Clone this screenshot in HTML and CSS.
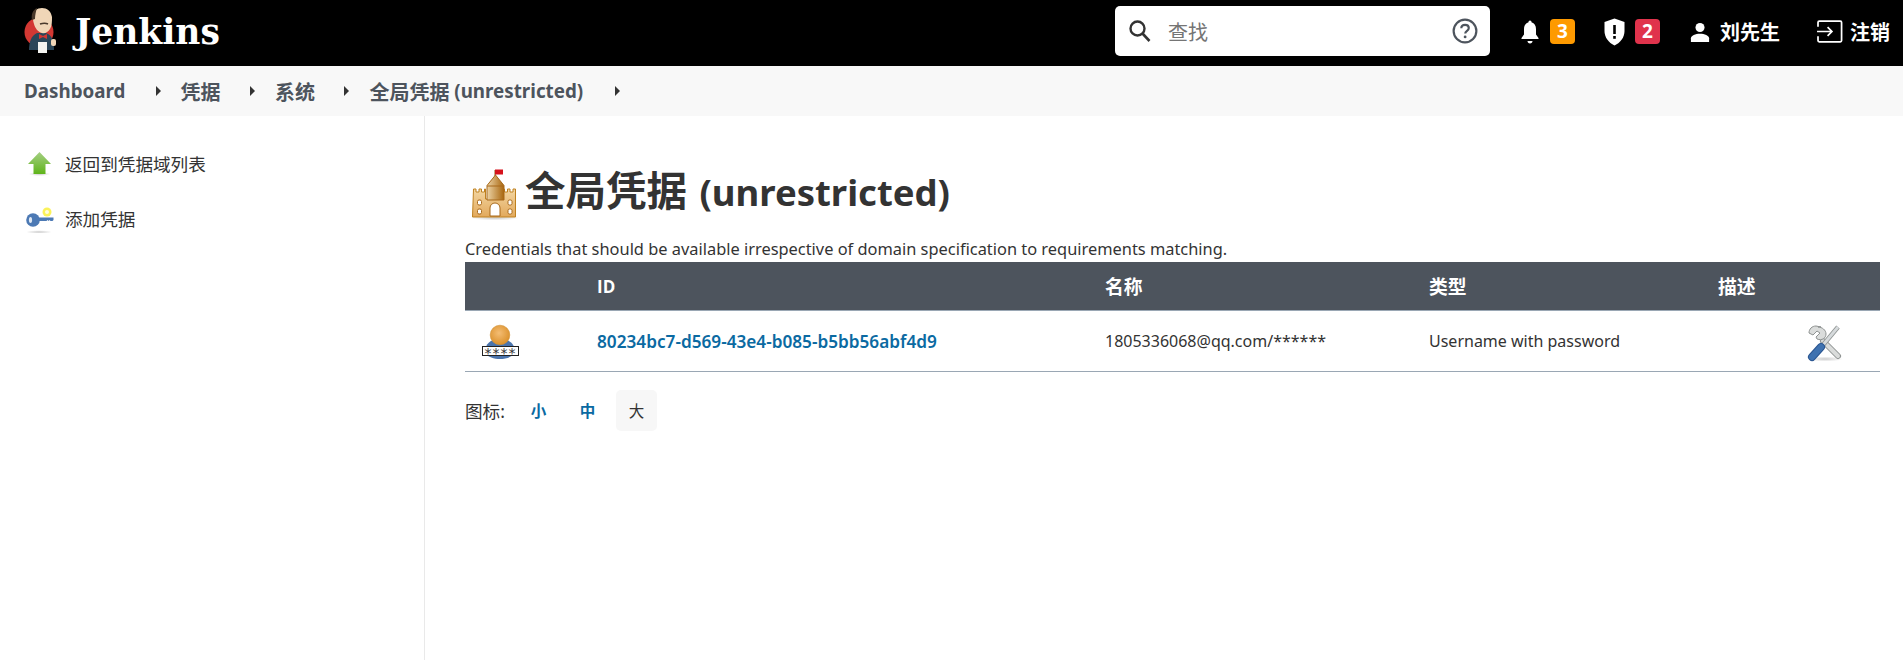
FILE: index.html
```html
<!DOCTYPE html>
<html lang="zh-CN">

<head>
    <meta charset="UTF-8">
    <title>全局凭据 (unrestricted) [Jenkins]</title>
    <link rel="stylesheet" href="styles.css">
</head>

<body>
    <svg class="defs" width="0" height="0">
        <defs>
            <linearGradient id="grad-green" x1="0" y1="0" x2="0" y2="1">
                <stop offset="0" stop-color="#a5cf83" />
                <stop offset="1" stop-color="#5fb41a" />
            </linearGradient>
            <linearGradient id="grad-sand" x1="0" y1="0" x2="0" y2="1">
                <stop offset="0" stop-color="#f3d6a2" />
                <stop offset="1" stop-color="#e2a95c" />
            </linearGradient>
            <linearGradient id="grad-tower" x1="0" y1="0" x2="1" y2="0">
                <stop offset="0" stop-color="#ecd3a6" />
                <stop offset="1" stop-color="#a9670f" />
            </linearGradient>
            <radialGradient id="grad-head" cx="0.45" cy="0.4" r="0.65">
                <stop offset="0" stop-color="#f4bd74" />
                <stop offset="1" stop-color="#d98d25" />
            </radialGradient>
            <radialGradient id="grad-shadow">
                <stop offset="0" stop-color="#999" stop-opacity="0.5" />
                <stop offset="1" stop-color="#999" stop-opacity="0" />
            </radialGradient>
        </defs>
    </svg>

    <header class="page-header">
        <a class="logo">
            <svg class="logo-head" width="60" height="60" viewBox="0 0 60 60">
                <circle cx="29" cy="32" r="14.500" fill="#d33833" />
                <path d="M19 50c0-8 2-14 8-17h9c6 2 8 8 8 17z" fill="#2b4658" />
                <path d="M23 17c0-6 4-9 9-9s9 3 10 9c0 4 0 9-2 12-2 3-5 5-8 4-4-1-7-5-8-9-1-3-1-5-1-7z" fill="#f0d6b7" />
                <path d="M22 20c-1-6 1-10 5-12-1 3-2 7-2 11z" fill="#49392b" />
                <path d="M30 24c3-1 6-1 8 0" fill="none" stroke="#49392b" stroke-width="1.600" />
                <path d="M29 34l4 2 4-2v5l-4-2-4 2z" fill="#d33833" />
                <rect x="28" y="42" width="9" height="11" fill="#f4f4f0" />
                <rect x="41" y="39" width="5" height="7" rx="2" fill="#f0d6b7" />
            </svg>
            <span class="logo-text">Jenkins</span>
        </a>
        <div class="search-box">
            <svg class="search-icon" width="24" height="24" viewBox="0 0 24 24">
                <circle cx="9.500" cy="9.500" r="7" fill="none" stroke="#333" stroke-width="2.400" />
                <path d="M14.500 14.500l7 7.500" stroke="#333" stroke-width="2.600" />
            </svg>
            <span class="search-placeholder">查找</span>
            <svg class="help-icon" width="26" height="26" viewBox="0 0 24 24">
                <circle cx="12" cy="12" r="10.500" fill="none" stroke="#4d545d" stroke-width="2" />
                <path d="M8.600 9.500c0-2 1.500-3.200 3.500-3.200s3.400 1.200 3.400 3c0 2.600-3.300 2.500-3.300 5.100" fill="none" stroke="#4d545d" stroke-width="2" />
                <circle cx="12.100" cy="17.500" r="1.300" fill="#4d545d" />
            </svg>
        </div>
        <div class="header-item bell-item">
            <svg width="20" height="26" viewBox="0 0 20 26">
                <path d="M10 1.500c1 0 1.500 .8 1.500 1.700 3 1 4.500 3.500 4.500 7v5.300l2.500 3.500v1H1.500v-1L4 15.500v-5.300c0-3.500 1.500-6 4.500-7C8.500 2.300 9 1.500 10 1.500z" fill="#fff" />
                <path d="M7.500 22h5c0 1.500-1 2.500-2.500 2.500S7.500 23.500 7.500 22z" fill="#fff" />
            </svg>
            <span class="badge badge-warn">3</span>
        </div>
        <div class="header-item shield-item">
            <svg width="23" height="28" viewBox="0 0 22 28">
                <path d="M11 .5l10 3.500v9c0 6.500-4 11.500-10 14.500C5 24.500 1 19.500 1 13V4z" fill="#fff" />
                <rect x="9.700" y="7" width="2.600" height="9" fill="#000" />
                <rect x="9.700" y="18" width="2.600" height="2.800" fill="#000" />
            </svg>
            <span class="badge badge-danger">2</span>
        </div>
        <div class="header-item user-item">
            <svg width="20" height="20" viewBox="0 0 22 22">
                <circle cx="11" cy="6" r="5" fill="#fff" />
                <path d="M1 22v-4c0-3 5-5 10-5s10 2 10 5v4z" fill="#fff" />
            </svg>
            <span>刘先生</span>
        </div>
        <div class="header-item logout-item">
            <svg width="27" height="23" viewBox="0 0 28 24">
                <path d="M2 7V2.500c0-.8.500-1.300 1.300-1.300h22c.8 0 1.300.5 1.300 1.300v19c0 .8-.5 1.300-1.300 1.300h-22c-.8 0-1.300-.5-1.300-1.300V17" fill="none" stroke="#fff" stroke-width="1.800" />
                <path d="M1 12h15M12 7.500l4.500 4.500-4.500 4.500" fill="none" stroke="#fff" stroke-width="1.800" />
            </svg>
            <span>注销</span>
        </div>
    </header>

    <nav class="breadcrumbs">
        <a class="crumb crumb-dash"><span class="lat">Dashboard</span></a>
        <a class="crumb crumb-a">凭据</a>
        <a class="crumb crumb-b">系统</a>
        <a class="crumb crumb-c">全局凭据<span class="lat">&nbsp;(unrestricted)</span></a>
    </nav>

    <div class="page-body">
        <aside class="side-panel">
            <div class="task">
                <svg width="30" height="30" viewBox="0 -1 30 30">
                    <ellipse cx="13.500" cy="25" rx="11" ry="2" fill="url(#grad-shadow)" />
                    <path d="M13.500 3L25 15H19.500V25H7.500V15H2z" fill="url(#grad-green)" />
                </svg>
                <span>返回到凭据域列表</span>
            </div>
            <div class="task">
                <svg class="key-icon" width="30" height="30" viewBox="0 -2 30 30">
                    <ellipse cx="13" cy="27" rx="13" ry="1.800" fill="url(#grad-shadow)" />
                    <circle cx="21" cy="7" r="4.500" fill="#fbf25a" />
                    <circle cx="21" cy="7" r="2" fill="#fffde0" />
                    <path d="M10 12.500h17.500v2.500l-1 1h-2l-1-1-1 1-1-1-1 1h-10.500z" fill="#4c79b4" />
                    <circle cx="7" cy="15" r="6.800" fill="#4c79b4" />
                    <ellipse cx="4.500" cy="15" rx="1.600" ry="3" fill="#dfe8f3" />
                </svg>
                <span>添加凭据</span>
            </div>
        </aside>

        <main class="main-panel">
            <h1 class="page-title">
                <svg width="70" height="70" viewBox="0 0 70 70">
                    <ellipse cx="35" cy="58" rx="24" ry="2.500" fill="url(#grad-shadow)" />
                    <rect x="34.500" y="10" width="1.200" height="6" fill="#8a5a14" />
                    <rect x="35" y="9.500" width="8" height="5" fill="#d6121c" />
                    <path d="M13.500 29h2.500v3h3v-3h2.500v3h3v-3h1v10h18V29h1v3h3v-3h2.500v3h3v-3h2.500v28h-43z" fill="url(#grad-sand)" stroke="#bf8120" />
                    <path d="M35.500 15L44 25.500V40H27V25.500z" fill="url(#grad-tower)" stroke="#a8691a" />
                    <path d="M27 26h17" stroke="#a8691a" />
                    <path d="M30 56V48c0-3 2.300-5 5-5s5 2 5 5v8z" fill="#fff" stroke="#a8691a" />
                    <rect x="17.500" y="40" width="4" height="5" rx="1.500" fill="#fff" stroke="#a8691a" />
                    <rect x="48" y="40" width="4" height="5" rx="1.500" fill="#fff" stroke="#a8691a" />
                    <rect x="17.500" y="49" width="4" height="5" rx="1.500" fill="#fff" stroke="#a8691a" />
                    <rect x="48" y="49" width="4" height="5" rx="1.500" fill="#fff" stroke="#a8691a" />
                </svg>
                <span>全局凭据<span class="title-lat"> (unrestricted)</span></span>
            </h1>
            <div class="description">Credentials that should be available irrespective of domain specification to requirements matching.</div>
            <table class="cred-table">
                <colgroup>
                    <col class="col-icon">
                    <col class="col-id">
                    <col class="col-name">
                    <col class="col-type">
                    <col class="col-desc">
                    <col>
                </colgroup>
                <thead>
                    <tr>
                        <th></th>
                        <th class="th-lat">ID</th>
                        <th>名称</th>
                        <th>类型</th>
                        <th>描述</th>
                        <th></th>
                    </tr>
                </thead>
                <tbody>
                    <tr>
                        <td class="icon-cell">
                            <svg width="60" height="50" viewBox="0 0 60 50">
                                <path d="M15 37c0-9 5-14 15-14s15 5 15 14c-3 4-9 6-15 6s-12-2-15-6z" fill="#4a74ad" />
                                <circle cx="30" cy="19" r="9.800" fill="url(#grad-head)" stroke="#d29236" stroke-width=".6" />
                                <rect x="12.500" y="30.500" width="36" height="9" fill="#fff" stroke="#222" stroke-width="1" />
                                <text class="stars" x="30.500" y="42">****</text>
                            </svg>
                        </td>
                        <td><a class="cred-link">80234bc7-d569-43e4-b085-b5bb56abf4d9</a></td>
                        <td>1805336068@qq.com/******</td>
                        <td>Username with password</td>
                        <td></td>
                        <td class="tool-cell">
                            <svg width="60" height="50" viewBox="0 0 60 50">
                                <ellipse cx="30" cy="43" rx="18" ry="2.500" fill="url(#grad-shadow)" />
                                <path d="M28 25l15 15" stroke="#8f9392" stroke-width="6" stroke-linecap="round" />
                                <path d="M28 25l15 15" stroke="#dadcdb" stroke-width="4" stroke-linecap="round" />
                                <path d="M21 10c-4 0-7 3-7 7l4 2 4-4 3 2-4 4 1 2c5 2 9-1 9-5 0-4-4-7-8-7l3 0z" fill="#dadcdb" stroke="#8f9392" />
                                <path d="M28 29l15-18" stroke="#8f9392" stroke-width="4.500" />
                                <path d="M28 29l15-18" stroke="#d6dadc" stroke-width="2.800" />
                                <path d="M17 41l9-10" stroke="#2a5590" stroke-width="8" stroke-linecap="round" />
                                <path d="M17 41l9-10" stroke="#3f72b0" stroke-width="6" stroke-linecap="round" />
                            </svg>
                        </td>
                    </tr>
                </tbody>
            </table>
            <div class="icon-sizes">
                <span class="icon-label">图标:</span>
                <a class="size-opt">小</a>
                <a class="size-opt">中</a>
                <a class="size-opt current">大</a>
            </div>
        </main>
    </div>
</body>

</html>
```

FILE: styles.css
```css
html,
body {
    height: 100%;
    margin: 0;
    padding: 0;
}

body {
    font-family: "Noto Sans", "Noto Sans CJK SC", sans-serif;
    font-size: 16px;
    color: #333;
    background-color: white;
    display: flex;
    flex-direction: column;
    overflow: hidden;
}

.defs {
    position: absolute;
}

.page-header {
    height: 66px;
    flex-shrink: 0;
    background-color: black;
    color: white;
    display: flex;
    align-items: center;
    font-weight: bold;
    font-size: 20px;
}

.logo {
    display: flex;
    align-items: center;
    padding-left: 10px;
    margin-right: auto;
}

.logo-head {
    margin-top: -6px;
}

.logo-text {
    font-family: "DejaVu Serif", serif;
    font-size: 34.5px;
    font-weight: bold;
    margin-left: 5px;
    margin-top: -3px;
}

.search-box {
    width: 375px;
    height: 50px;
    background-color: white;
    border-radius: 5px;
    display: flex;
    align-items: center;
    margin-right: 30px;
    font-weight: normal;
    margin-top: -4px;
}

.search-icon {
    margin-left: 13px;
}

.search-placeholder {
    color: #757575;
    font-size: 20px;
    margin-left: 16px;
    flex: 1;
}

.help-icon {
    margin-right: 12px;
}

.header-item {
    display: flex;
    align-items: center;
    margin-top: -3px;
}

.bell-item {
    margin-right: 28px;
}

.shield-item {
    margin-right: 30px;
}

.user-item {
    margin-right: 36px;
}

.logout-item {
    margin-right: 13px;
}

.bell-item span {
    margin-left: 10px;
}

.shield-item span {
    margin-left: 9px;
}

.user-item span {
    margin-left: 10px;
}

.logout-item span {
    margin-left: 7px;
}

.badge {
    width: 25px;
    height: 25px;
    border-radius: 4px;
    text-align: center;
    line-height: 25px;
    font-size: 19px;
}

.badge-warn {
    background-color: #fe9a00;
}

.badge-danger {
    background-color: #e0334c;
}

.breadcrumbs {
    height: 50px;
    flex-shrink: 0;
    background-color: #f8f8f8;
    display: flex;
    align-items: center;
    padding-left: 24px;
    font-size: 20px;
    font-weight: bold;
    color: #4d545d;
}

.crumb {
    display: flex;
    align-items: center;
}

.lat {
    font-size: 18.8px;
    white-space: pre;
}

.crumb::after {
    content: "";
    border-left: 5px solid #333;
    border-top: 5px solid transparent;
    border-bottom: 5px solid transparent;
}

.crumb-dash::after {
    margin: 0 19px 0 31px;
}

.crumb-a::after,
.crumb-b::after {
    margin: 0 20px 0 29.5px;
}

.crumb-c::after {
    margin-left: 32px;
}

.page-body {
    flex: 1;
    display: flex;
}

.side-panel {
    width: 425px;
    flex-shrink: 0;
    box-sizing: border-box;
    border-right: 1px solid #e9e9e9;
    padding: 32px 0 0 26px;
    font-size: 17.6px;
}

.task {
    height: 30px;
    display: flex;
    align-items: center;
    gap: 9px;
    margin-bottom: 25px;
}

.main-panel {
    flex: 1;
    padding: 0 23px 0 40px;
}

.page-title {
    margin: 48px 0 0 0;
    height: 54px;
    display: flex;
    align-items: center;
    font-size: 40.5px;
    line-height: 54px;
    font-weight: bold;
    color: #333;
}

.page-title svg {
    margin: 8px -5px 0 -5px;
}

.title-lat {
    font-size: 36.5px;
    margin-left: 3px;
}

.description {
    margin-top: 20px;
    font-size: 16.4px;
    line-height: 21px;
    height: 24px;
}

.cred-table {
    width: 100%;
    table-layout: fixed;
    border-collapse: collapse;
    font-size: 16px;
}

.col-icon {
    width: 132px;
}

.col-id {
    width: 508px;
}

.col-name {
    width: 324px;
}

.col-type {
    width: 289px;
}

.col-desc {
    width: 77px;
}

.cred-table th {
    height: 48px;
    padding: 0;
    background-color: #4d545d;
    color: white;
    text-align: left;
    font-size: 18.8px;
    font-weight: bold;
    border-bottom: 1px solid #9aa7b4;
}

.cred-table .th-lat {
    font-family: "Open Sans", sans-serif;
    font-size: 17px;
}

.cred-table td {
    height: 60px;
    padding: 0;
    border-bottom: 1px solid #9aa7b4;
}

.icon-cell svg {
    display: block;
    margin-left: 5px;
}

.tool-cell svg {
    display: block;
}

.stars {
    font-family: "DejaVu Sans", sans-serif;
    font-size: 14px;
    letter-spacing: 1px;
    text-anchor: middle;
    fill: #333;
}

.cred-link {
    color: #0b6aa2;
    font-size: 17.2px;
    font-weight: 600;
}

.icon-sizes {
    display: flex;
    align-items: center;
    gap: 8px;
    margin-top: 18px;
    font-size: 17.6px;
    height: 41px;
}

.icon-label {
    margin-right: 5px;
}

.size-opt {
    width: 41px;
    height: 41px;
    display: flex;
    align-items: center;
    justify-content: center;
    font-size: 15.5px;
    font-weight: bold;
    color: #0b6aa2;
    border-radius: 5px;
}

.size-opt.current {
    background-color: #f7f7f7;
    color: #333;
    font-weight: normal;
}
```
